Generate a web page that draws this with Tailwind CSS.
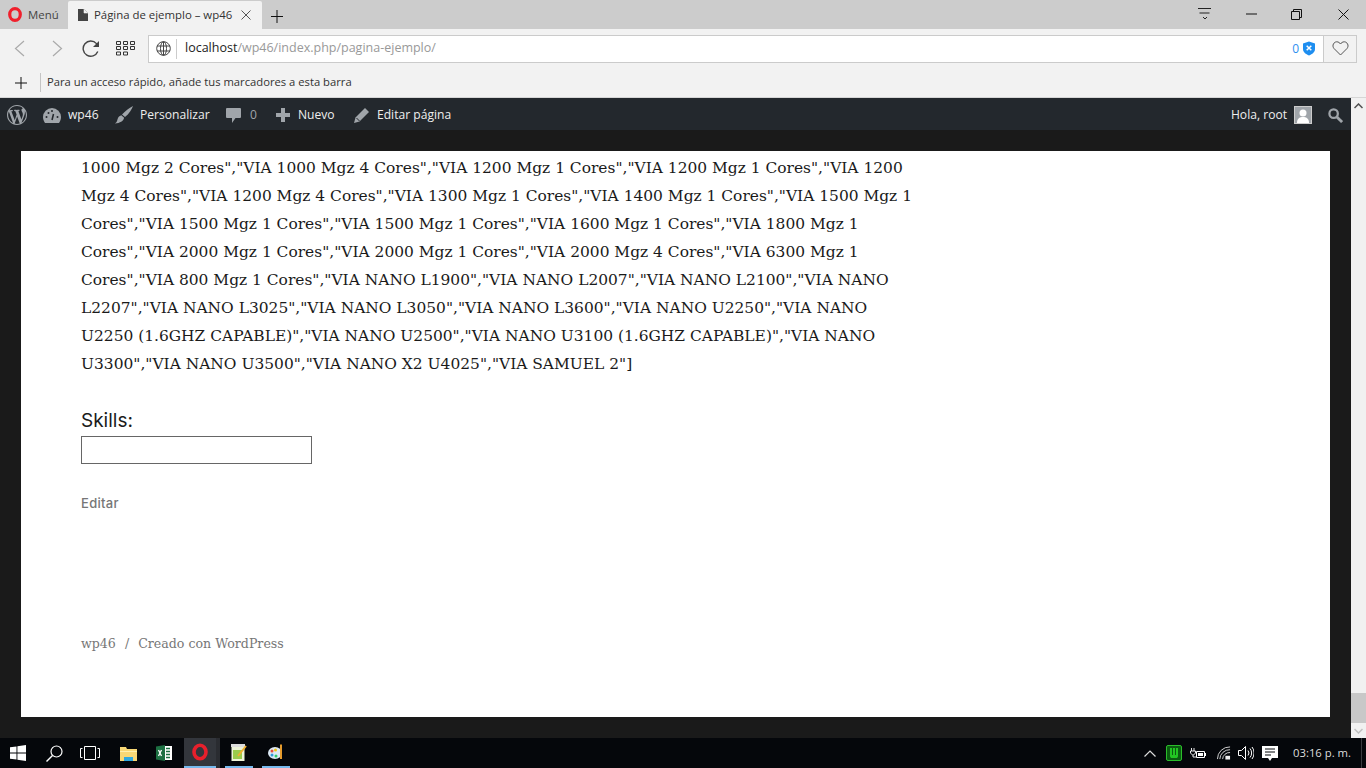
<!DOCTYPE html>
<html lang="es">
<head>
<meta charset="UTF-8">
<title>Página de ejemplo – wp46</title>
<script src="https://cdn.jsdelivr.net/npm/@tailwindcss/browser@4"></script>
</head>
<body class="w-[1366px] h-[768px] overflow-hidden flex flex-col bg-[#1a1a1a] font-['Open_Sans',sans-serif]">

<!-- Opera title bar -->
<div class="h-[29px] bg-[#cccccc] flex shrink-0">
  <div class="w-[68px] flex items-center pl-2 gap-[6px] text-[11.4px] text-[#444]">
    <svg width="14" height="15" viewBox="0 0 14 15"><ellipse cx="7" cy="7.500" rx="5.300" ry="5.800" fill="none" stroke="#f0202c" stroke-width="3.200"/></svg>
    <span>Menú</span>
  </div>
  <div class="w-[194px] mt-[1px] bg-[#f2f2f2] rounded-t-[2px] flex items-center pl-[10px] text-[11.4px] text-[#333]">
    <svg width="10" height="12" viewBox="0 0 10 12"><path d="M0 0h6l4 4v8H0z" fill="#444"/><path d="M6 0v4h4" fill="#f2f2f2" stroke="#f2f2f2" stroke-width=".6"/></svg>
    <span class="ml-[6px] whitespace-nowrap">Página de ejemplo – wp46</span>
    <svg class="ml-[9px]" width="10" height="10" viewBox="0 0 10 10"><path d="M.5.500l9 9M9.500.500l-9 9" stroke="#555" fill="none"/></svg>
  </div>
  <svg class="ml-[9px] mt-[10px]" width="12" height="13" viewBox="0 0 12 13"><path d="M6 0v13M0 6.500h12" stroke="#111" fill="none"/></svg>
  <div class="ml-auto flex">
    <div class="w-[46px] flex items-center justify-center pb-[1px]">
      <svg width="14" height="12" viewBox="0 0 14 12"><path d="M0 .500h13M1.500 5h10M5 9l2 2 2-2" stroke="#222" fill="none"/></svg>
    </div>
    <div class="w-[46px] flex items-center justify-center pb-[1px]">
      <svg width="11" height="2" viewBox="0 0 11 2"><path d="M0 1h11" stroke="#111"/></svg>
    </div>
    <div class="w-[46px] flex items-center justify-center pb-[1px]">
      <svg class="mr-[2px]" width="11" height="11" viewBox="0 0 11 11"><path d="M.5 2.500h8v8h-8zM2.500 2.500v-2h8v8h-2" stroke="#111" fill="none"/></svg>
    </div>
    <div class="w-[46px] flex items-center justify-center pb-[1px]">
      <svg width="11" height="11" viewBox="0 0 11 11"><path d="M.5.500l10 10M10.500.500l-10 10" stroke="#111" fill="none"/></svg>
    </div>
  </div>
</div>

<!-- Toolbar -->
<div class="h-[39px] bg-[#f2f2f2] flex items-center shrink-0">
  <svg class="ml-[14px]" width="11" height="17" viewBox="0 0 11 17"><path d="M10 1L1.500 8.500 10 16" stroke="#aaa" stroke-width="1.200" fill="none"/></svg>
  <svg class="ml-[27px]" width="11" height="17" viewBox="0 0 11 17"><path d="M1 1l8.500 7.500L1 16" stroke="#aaa" stroke-width="1.200" fill="none"/></svg>
  <svg class="ml-[19px]" width="18" height="18" viewBox="0 0 18 18"><path d="M15.800 11.500A7.600 7.600 0 1 1 14.500 3.600L16.500 6" stroke="#444" stroke-width="1.400" fill="none"/><path d="M17 1v6h-6z" fill="#444"/></svg>
  <svg class="ml-[16px]" width="19" height="15" viewBox="0 0 19 15"><g fill="none" stroke="#333"><path d="M.5.500h4v3h-4zM7.500.500h4v3h-4zM14.500.500h4v3h-4zM.5 5.500h4v3h-4zM7.500 5.500h4v3h-4zM14.500 5.500h4v3h-4zM.5 11h4v3h-4zM7.500 11h4v3h-4z"/></g></svg>
  <div class="ml-[13px] w-[1209px] h-[28px] border border-[#cbcbcb] bg-white flex items-center">
    <svg class="ml-[7px]" width="15" height="15" viewBox="0 0 15 15"><g fill="none" stroke="#444"><circle cx="7.500" cy="7.500" r="6.800"/><ellipse cx="7.500" cy="7.500" rx="3" ry="6.800"/><path d="M1 5h13M1 10h13M7.500 1v13"/></g></svg>
    <div class="ml-[5px] w-px h-[20px] bg-[#ccc]"></div>
    <div class="ml-[8px] text-[12.5px] text-[#999] whitespace-nowrap"><span class="text-[#222]">localhost</span>/wp46/index.php/pagina-ejemplo/</div>
    <span class="ml-auto text-[12px] text-[#2d8ff0]">0</span>
    <svg class="ml-[4px] mr-[8px]" width="12" height="15" viewBox="0 0 13 15"><path d="M6.500 0l6.500 2v6c0 3.500-3 5.500-6.500 7C3 13.500 0 11.500 0 8V2z" fill="#1e8ef0"/><path d="M4 4.500l5 5M9 4.500l-5 5" stroke="#fff" stroke-width="1.600"/></svg>
    <div class="w-[33px] h-full border-l border-[#cbcbcb] bg-[#f2f2f2] flex items-center justify-center">
      <svg width="17" height="15" viewBox="0 0 17 15"><path d="M8.500 14L2 7.500C-.500 4.500 2 .800 4.700.800c1.800 0 3 1 3.800 2.200C9.300 1.800 10.500.800 12.300.800 15 .800 17.500 4.500 15 7.500z" fill="none" stroke="#555"/></svg>
    </div>
  </div>
</div>

<!-- Bookmarks bar -->
<div class="h-[29px] bg-[#f2f2f2] border-b border-[#d6d6d6] flex items-center shrink-0 box-content">
  <svg class="ml-[15px]" width="12" height="12" viewBox="0 0 12 12"><path d="M6 0v12M0 6h12" stroke="#111" fill="none"/></svg>
  <div class="ml-[13px] w-px h-[19px] bg-[#c4c4c4]"></div>
  <span class="ml-[6px] text-[11.24px] text-[#333] whitespace-nowrap">Para un acceso rápido, añade tus marcadores a esta barra</span>
</div>

<!-- Page + scrollbar -->
<div class="flex-1 flex min-h-0">
  <div class="w-[1351px] flex flex-col">
    <!-- WP admin bar -->
    <div class="h-[32px] bg-[#23282d] flex items-center pt-[2px] text-[12.1px] text-[#eee] shrink-0">
      <svg class="ml-[7px]" width="20" height="20" viewBox="0 0 20 20"><path fill="#a0a5aa" d="M20 10c0-5.510-4.490-10-10-10C4.480 0 0 4.490 0 10c0 5.520 4.480 10 10 10 5.510 0 10-4.480 10-10zM7.780 15.370L4.370 6.220c.55-.02 1.170-.08 1.170-.08.5-.06.44-1.130-.06-1.110 0 0-1.450.11-2.370.11-.18 0-.37 0-.58-.01C4.120 2.690 6.870 1.110 10 1.110c2.330 0 4.450.87 6.050 2.340-.68-.11-1.650.39-1.650 1.580 0 .74.45 1.360.9 2.100.35.61.55 1.360.55 2.460 0 1.490-1.400 5-1.400 5l-3.030-8.370c.54-.02.82-.17.82-.17.5-.05.44-1.250-.06-1.220 0 0-1.440.12-2.380.12-.87 0-2.330-.12-2.330-.12-.5-.03-.56 1.200-.06 1.220l.92.080 1.260 3.410zM17.410 10c.24-.64.74-1.870.43-4.250.7 1.290 1.050 2.710 1.050 4.250 0 3.290-1.730 6.240-4.400 7.780.97-2.590 1.940-5.200 2.920-7.780zM6.100 18.090C3.120 16.650 1.110 13.530 1.110 10c0-1.300.23-2.480.72-3.590C3.250 10.300 4.670 14.200 6.100 18.090zm4.030-6.630l2.580 6.980c-.86.290-1.740.45-2.710.45-.79 0-1.570-.11-2.300-.33.81-2.370 1.630-4.730 2.430-7.100z"/></svg>
      <svg class="ml-[16px]" width="18" height="15" viewBox="0 0 18 15"><path d="M9 0a9 9 0 0 0-9 9c0 2.200.7 4 2 6h14c1.300-2 2-3.800 2-6a9 9 0 0 0-9-9z" fill="#a0a5aa"/><path d="M9 12l1.500-6" stroke="#23282d" stroke-width="1.500"/><circle cx="3.500" cy="9" r="1" fill="#23282d"/><circle cx="5.500" cy="5" r="1" fill="#23282d"/><circle cx="9" cy="3" r="1" fill="#23282d"/><circle cx="14.500" cy="9" r="1" fill="#23282d"/></svg>
      <span class="ml-[7px] w-[31px]">wp46</span>
      <svg class="ml-[16px]" width="18" height="18" viewBox="0 0 18 18"><path d="M18 0c-1 3-4 8-8 11l-3-2.500C10 5 15 1.500 18 0zM6.300 9.300l2.800 2.400C8.500 15 5 17 0 17.500c2.500-1.500 2-3.200 3-5.500.6-1.400 2-2.300 3.300-2.700z" fill="#a0a5aa"/></svg>
      <span class="ml-[7px] w-[69px] whitespace-nowrap">Personalizar</span>
      <svg class="ml-[17px]" width="15" height="17" viewBox="0 0 15 17"><path d="M1 1h13a1 1 0 0 1 1 1v8a1 1 0 0 1-1 1H9.500L6 16v-5H1a1 1 0 0 1-1-1V2a1 1 0 0 1 1-1z" fill="#a0a5aa"/></svg>
      <span class="ml-[9px] w-[8px] text-[#a0a5aa]">0</span>
      <svg class="ml-[18px]" width="14" height="14" viewBox="0 0 14 14"><path d="M5 0h4v5h5v4H9v5H5V9H0V5h5z" fill="#a0a5aa"/></svg>
      <span class="ml-[8px] w-[39px]">Nuevo</span>
      <svg class="ml-[17px]" width="15" height="15" viewBox="0 0 15 15"><path d="M11 0l4 4-9.500 9.500L0 15l1.500-5.500z" fill="#a0a5aa"/><path d="M2.500 10l3 3" stroke="#23282d"/></svg>
      <span class="ml-[8px] whitespace-nowrap">Editar página</span>
      <span class="ml-auto mr-[1px]">Hola, root</span>
      <div class="ml-[6px] w-[18px] h-[18px] bg-[#a0a5aa] border border-[#ccc] flex items-end justify-center overflow-hidden">
        <svg width="14" height="15" viewBox="0 0 14 15"><circle cx="7" cy="5" r="3.500" fill="#fff"/><path d="M1 15c0-5 3-6 6-6s6 1 6 6z" fill="#fff"/></svg>
      </div>
      <svg class="ml-[16px] mr-[8px]" width="15" height="15" viewBox="0 0 16 16"><circle cx="6" cy="6" r="4.500" fill="none" stroke="#a0a5aa" stroke-width="2.400"/><path d="M9.500 9.500L15 15" stroke="#a0a5aa" stroke-width="3"/></svg>
    </div>
    <!-- Site -->
    <div class="flex-1 min-h-0 pt-[21px] pb-[21px] px-[21px]">
      <div class="h-full bg-white pl-[60px] flex flex-col">
        <div class="font-['DejaVu_Serif',serif] text-[15.45px] leading-[28px] text-[#1a1a1a] whitespace-nowrap h-[224px] pt-[3px]">
          <p>1000 Mgz 2 Cores","VIA 1000 Mgz 4 Cores","VIA 1200 Mgz 1 Cores","VIA 1200 Mgz 1 Cores","VIA 1200</p>
          <p>Mgz 4 Cores","VIA 1200 Mgz 4 Cores","VIA 1300 Mgz 1 Cores","VIA 1400 Mgz 1 Cores","VIA 1500 Mgz 1</p>
          <p>Cores","VIA 1500 Mgz 1 Cores","VIA 1500 Mgz 1 Cores","VIA 1600 Mgz 1 Cores","VIA 1800 Mgz 1</p>
          <p>Cores","VIA 2000 Mgz 1 Cores","VIA 2000 Mgz 1 Cores","VIA 2000 Mgz 4 Cores","VIA 6300 Mgz 1</p>
          <p>Cores","VIA 800 Mgz 1 Cores","VIA NANO L1900","VIA NANO L2007","VIA NANO L2100","VIA NANO</p>
          <p>L2207","VIA NANO L3025","VIA NANO L3050","VIA NANO L3600","VIA NANO U2250","VIA NANO</p>
          <p>U2250 (1.6GHZ CAPABLE)","VIA NANO U2500","VIA NANO U3100 (1.6GHZ CAPABLE)","VIA NANO</p>
          <p>U3300","VIA NANO U3500","VIA NANO X2 U4025","VIA SAMUEL 2"]</p>
        </div>
        <label class="mt-[33px] text-[19px] leading-[26px] text-[#1a1a1a] font-['Inter',sans-serif]">Skills:</label>
        <input type="text" class="mt-[2px] w-[231px] h-[28px] border border-[#666] bg-white">
        <a class="mt-[31px] text-[13px] leading-[16px] font-medium tracking-[0.3px] text-[#767676] font-['Inter',sans-serif]">Editar</a>
        <div class="mt-[123px] font-['DejaVu_Serif',serif] text-[12.6px] leading-[20px] text-[#767676]">wp46 <span class="mx-[5px]">/</span> Creado con WordPress</div>
      </div>
    </div>
  </div>
  <!-- Scrollbar -->
  <div class="w-[15px] bg-[#f1f1f1] flex flex-col items-center justify-between">
    <svg class="mt-[5px]" width="9" height="6" viewBox="0 0 9 6"><path d="M.5 5l4-4 4 4" stroke="#505050" stroke-width="1.500" fill="none"/></svg>
    <div class="mt-auto w-full h-[30px] bg-[#c8c8c8] mb-[15px] relative">
      <svg class="absolute left-[3px] top-[35px]" width="9" height="6" viewBox="0 0 9 6"><path d="M.5 1l4 4 4-4" stroke="#c0c0c0" stroke-width="1.500" fill="none"/></svg>
    </div>
  </div>
</div>

<!-- Windows taskbar -->
<div class="h-[30px] bg-[#05070b] flex items-center shrink-0 text-white">
  <svg class="ml-[10px]" width="16" height="16" viewBox="0 0 16 16"><path d="M0 2.300l6.500-.9v6.200H0zM7.400 1.300L16 0v7.600H7.400zM0 8.400h6.500v6.200L0 13.700zM7.400 8.400H16V16l-8.600-1.300z" fill="#fff"/></svg>
  <svg class="ml-[20px]" width="17" height="17" viewBox="0 0 17 17"><circle cx="10.500" cy="6.500" r="5.500" fill="none" stroke="#fff" stroke-width="1.200"/><path d="M6.500 10.500L.5 16.500" stroke="#fff" stroke-width="1.400"/></svg>
  <svg class="ml-[17px]" width="20" height="14" viewBox="0 0 20 14"><path d="M4.500.5h11v13h-11zM2.500 2.500h-2v9h2M17.500 2.500h2v9h-2" fill="none" stroke="#fff"/></svg>
  <div class="ml-[10px] w-[36px] h-full flex items-center justify-center">
    <svg width="17" height="15" viewBox="0 0 17 15"><path d="M0 1h6l1 2h10v12H0z" fill="#f8d775"/><path d="M0 5h17v1H0z" fill="#fff0b0"/><path d="M4 15v-4h9v4z" fill="#2fa8e0"/></svg>
  </div>
  <div class="w-[36px] h-full flex items-center justify-center">
    <svg width="16" height="16" viewBox="0 0 16 16"><path d="M8 1h8v14H8z" fill="#fff"/><path d="M10 3.500h4M10 6.500h4M10 9.500h4M10 12.500h4" stroke="#1d6f42" stroke-width="1.500"/><path d="M0 1.500L9 0v16L0 14.500z" fill="#1d6f42"/><path d="M2.500 5l3 6M5.500 5l-3 6" stroke="#fff" stroke-width="1.300"/></svg>
  </div>
  <div class="ml-[2px] w-[32px] h-full bg-[#33363c] flex items-center justify-center border-b-[2px] border-[#76b9ed]">
    <svg width="16" height="18" viewBox="0 0 16 18"><ellipse cx="8" cy="9" rx="6" ry="6.800" fill="none" stroke="#e8202c" stroke-width="3.600"/></svg>
  </div>
  <div class="w-[4px] h-full bg-[#2a2c31]"></div>
  <div class="w-[28px] ml-[5px] h-full flex items-center justify-center border-b-[2px] border-[#76b9ed]">
    <svg width="16" height="17" viewBox="0 0 16 17"><path d="M.5 2h13v15H.5z" fill="#eef4d8"/><path d="M2 6h9v9H2z" fill="#9acb4c"/><path d="M0 0h14v3H0z" fill="#ddd"/><path d="M7 12L15 2" stroke="#f0b030" stroke-width="2"/></svg>
  </div>
  <div class="ml-[9px] w-[28px] h-full flex items-center justify-center border-b-[2px] border-[#76b9ed]">
    <svg width="17" height="16" viewBox="0 0 17 16"><ellipse cx="7" cy="9" rx="7" ry="6" fill="#dce9f5"/><circle cx="4" cy="7" r="1.500" fill="#e74c3c"/><circle cx="7.500" cy="6" r="1.500" fill="#f1c40f"/><circle cx="4" cy="11" r="1.500" fill="#3498db"/><circle cx="8" cy="12" r="1.500" fill="#2ecc71"/><path d="M13 0l1 1v14h-2V1z" fill="#e69b2d"/></svg>
  </div>
  <svg class="ml-auto" width="12" height="7" viewBox="0 0 12 7"><path d="M.5 6.500L6 1l5.500 5.500" stroke="#ddd" stroke-width="1.200" fill="none"/></svg>
  <div class="ml-[10px] w-[16px] h-[16px] bg-[#0b5c10] border border-[#2bbd2b] rounded-[2px] flex items-center justify-center">
    <svg width="10" height="10" viewBox="0 0 10 10"><path d="M1 0h2v7h1V0h2v7h1V0h2v8.500L8 10H2L1 8.500z" fill="#22c622"/></svg>
  </div>
  <svg class="ml-[8px]" width="16" height="11" viewBox="0 0 16 11"><path d="M1.500 0v3M4 0v3M.5 3h5v2L3.500 7h-1L.5 5zM3 7v2h3" stroke="#fff" fill="none" stroke-width=".9"/><path d="M6.500 3.500h8v6h-8z" fill="none" stroke="#fff"/><path d="M8 5h5v3H8z" fill="#fff"/><path d="M15 5h1v3h-1z" fill="#fff"/></svg>
  <svg class="ml-[11px]" width="14" height="14" viewBox="0 0 15 14"><path d="M.5 13.500A13 13 0 0 1 14 .5M3 13.500A10.500 10.500 0 0 1 14 3.500M6 13.500A7.500 7.500 0 0 1 14 6.500" stroke="#ddd" fill="none"/><path d="M9 10h5v4H9z" fill="#eee"/></svg>
  <svg class="ml-[7px]" width="16" height="14" viewBox="0 0 16 14"><path d="M.5 4.500h3l4-4v13l-4-4h-3z" stroke="#fff" fill="none"/><path d="M10 4.500a4 4 0 0 1 0 5M12 2.500a7 7 0 0 1 0 9M14 1a9.500 9.500 0 0 1 0 12" stroke="#fff" fill="none"/></svg>
  <svg class="ml-[8px]" width="16" height="15" viewBox="0 0 16 15"><path d="M0 0h16v12h-6l-2 3-2-3H0z" fill="#fff"/><path d="M3 3h10M3 6h10M3 9h6" stroke="#05070b"/></svg>
  <span class="ml-[15px] w-[68px] text-[11.3px] whitespace-nowrap text-[#ddd]">03:16 p. m.</span>
  <div class="w-px h-full bg-[#3a3c40] mr-[4px]"></div>
</div>
</body>
</html>
